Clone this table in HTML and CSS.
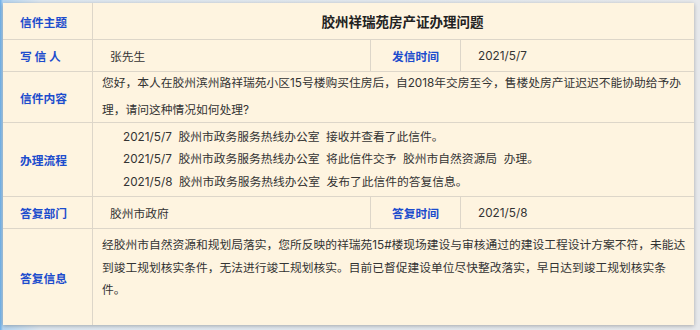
FILE: index.html
```html
<!DOCTYPE html>
<html lang="zh-CN">
<head>
<meta charset="utf-8">
<title>信件详情</title>
<link rel="stylesheet" href="styles.css">
</head>
<body>
<div class="card">
  <div class="cell label">信件主题</div>
  <div class="cell title wide">胶州祥瑞苑房产证办理问题</div>

  <div class="cell label">写 信 人</div>
  <div class="cell value">张先生</div>
  <div class="cell label center">发信时间</div>
  <div class="cell value last">2021/5/7</div>

  <div class="cell label">信件内容</div>
  <div class="cell text wide loose">您好，本人在胶州滨州路祥瑞苑小区15号楼购买住房后，自2018年交房至今，售楼处房产证迟迟不能协助给予办理，请问这种情况如何处理?</div>

  <div class="cell label">办理流程</div>
  <div class="cell flow wide">
    <div class="step">2021/5/7  胶州市政务服务热线办公室  接收并查看了此信件。</div>
    <div class="step">2021/5/7  胶州市政务服务热线办公室  将此信件交予  胶州市自然资源局  办理。</div>
    <div class="step">2021/5/8  胶州市政务服务热线办公室  发布了此信件的答复信息。</div>
  </div>

  <div class="cell label">答复部门</div>
  <div class="cell value">胶州市政府</div>
  <div class="cell label center">答复时间</div>
  <div class="cell value last">2021/5/8</div>

  <div class="cell label bottom">答复信息</div>
  <div class="cell text wide top bottom">经胶州市自然资源和规划局落实，您所反映的祥瑞苑15#楼现场建设与审核通过的建设工程设计方案不符，未能达到竣工规划核实条件，无法进行竣工规划核实。目前已督促建设单位尽快整改落实，早日达到竣工规划核实条件。</div>
</div>
</body>
</html>
```

FILE: styles.css
```css
* { box-sizing: border-box; }
html, body { margin: 0; }
body {
  width: 700px;
  height: 330px;
  overflow: hidden;
  padding: 3px 0 0 3px;
  background: linear-gradient(90deg, #6aaee9 0px, #b7d6f1 3px, #dde7f0 40px, #e7e9ec 100%);
  font-family: Inter, "Noto Sans CJK SC", sans-serif;
  font-size: 11.75px;
  color: #333;
}
.card {
  width: 691px;
  height: 322px;
  background: #fef4e0;
  box-shadow: 0 1px 4px rgba(0, 0, 0, 0.28);
  display: grid;
  grid-template-columns: 90px 278px 90px 233px;
  grid-template-rows: 37px 32px 51px 74px 32px 96px;
}
.cell {
  border-right: 1px solid #ddd6c9;
  border-bottom: 1px solid #ddd6c9;
  display: flex;
  align-items: center;
}
.cell.wide { grid-column: 2 / 5; border-right: none; }
.cell.last { border-right: none; }
.cell.bottom { border-bottom: none; }
.label {
  color: #1c4ccd;
  font-weight: 700;
  padding-left: 17px;
  white-space: pre;
}
.label.center { justify-content: center; padding-left: 0; }
.title {
  justify-content: center;
  padding-left: 18px;
  font-size: 13.5px;
  font-weight: 700;
  color: #222;
}
.value { padding-left: 17px; }
.text { padding: 0 6px 0 9px; }
.loose { line-height: 27px; }
.text.top { align-items: flex-start; padding-top: 5px; line-height: 22.5px; }
.flow {
  flex-direction: column;
  align-items: flex-start;
  justify-content: center;
  padding-left: 30px;
  line-height: 22.5px;
}
.step { white-space: pre; }
```
